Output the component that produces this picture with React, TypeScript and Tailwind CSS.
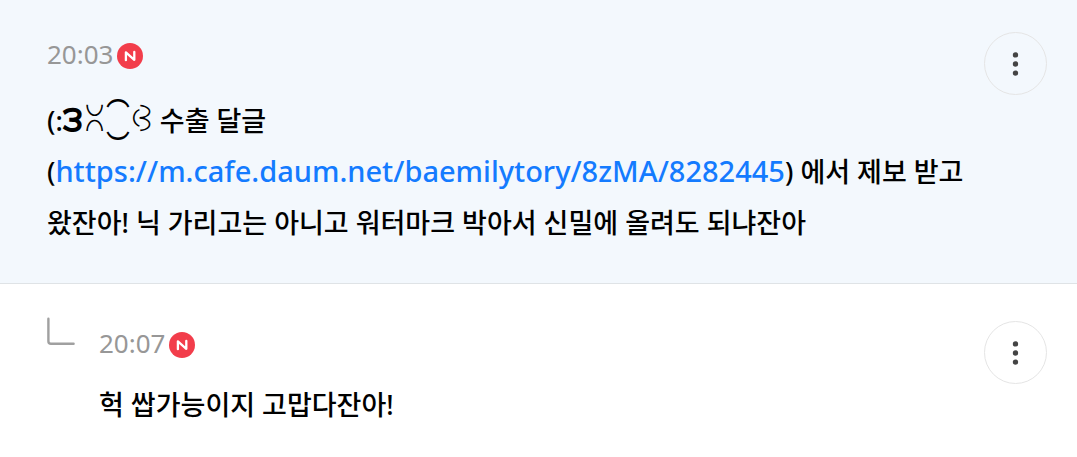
import React from 'react';

const NewBadge = () => (
  <svg role="img" aria-label="N" viewBox="0 0 26 26" className="size-[26px] shrink-0">
    <circle cx="13" cy="13" r="13" fill="#f23d4b" />
    <path
      d="M8.9 17.2V9.3l8.4 7.5V8.9"
      fill="none"
      stroke="#fff"
      strokeWidth="2.3"
      strokeLinecap="round"
      strokeLinejoin="round"
    />
  </svg>
);

const MoreButton = () => (
  <button
    type="button"
    aria-label="더보기"
    className="flex size-[63px] shrink-0 items-center justify-center rounded-full border border-[#e5e5e5]"
  >
    <svg viewBox="0 0 7 24" className="h-6 w-[7px]" fill="#444">
      <circle cx="3.5" cy="2.9" r="2.7" />
      <circle cx="3.5" cy="12" r="2.7" />
      <circle cx="3.5" cy="21.1" r="2.7" />
    </svg>
  </button>
);

const ReplyMark = () => (
  <svg viewBox="0 0 28 28" className="-mt-1 mr-6 size-7 shrink-0" fill="none" stroke="#a0a0a0" strokeWidth="2.4" strokeLinecap="round">
    <path d="M1.4 1.8v22.4a2.6 2.6 0 0 0 2.6 2.6h22.6" />
  </svg>
);

const CommentHead = ({ time }: { time: string }) => (
  <div className="flex items-center gap-1 pt-1.5">
    <time className="pb-1 text-[26px] leading-8 text-[#979797]">{time}</time>
    <NewBadge />
  </div>
);

const App: React.FC = () => {
  return (
    <ul className="min-h-screen bg-white font-['Noto_Sans','Noto_Sans_CJK_KR',sans-serif] text-black">
      <li className="flex items-start border-b border-[#dfe3e6] bg-[#f3f8fd] pt-8 pr-[30px] pb-[35px] pl-[47px]">
        <div className="min-w-0 flex-1">
          <CommentHead time="20:03" />
          <p className="mt-[21px] text-[27px] leading-[51px] font-medium">
            (:
            <span className="text-[36px] leading-none font-bold">౩</span>
            <span className="text-[30px] leading-none">ꇤ</span>
            <span className="text-[40px] leading-none font-bold">⁐</span>
            <span className="text-[30px] leading-none">ꃳ</span> 수출 달글
            <br />
            (
            <a href="https://m.cafe.daum.net/baemilytory/8zMA/8282445" className="text-[29px] leading-none text-[#147bff]">
              https://m.cafe.daum.net/baemilytory/8zMA/8282445
            </a>
            ) 에서 제보 받고
            <br />
            왔잔아! 닉 가리고는 아니고 워터마크 박아서 신밀에 올려도 되냐잔아
          </p>
        </div>
        <MoreButton />
      </li>
      <li className="flex items-start pt-[37px] pr-[30px] pb-5 pl-[47px]">
        <ReplyMark />
        <div className="min-w-0 flex-1">
          <CommentHead time="20:07" />
          <p className="mt-[18px] text-[27px] leading-12 font-medium">헉 쌉가능이지 고맙다잔아!</p>
        </div>
        <MoreButton />
      </li>
    </ul>
  );
};

export default App;
